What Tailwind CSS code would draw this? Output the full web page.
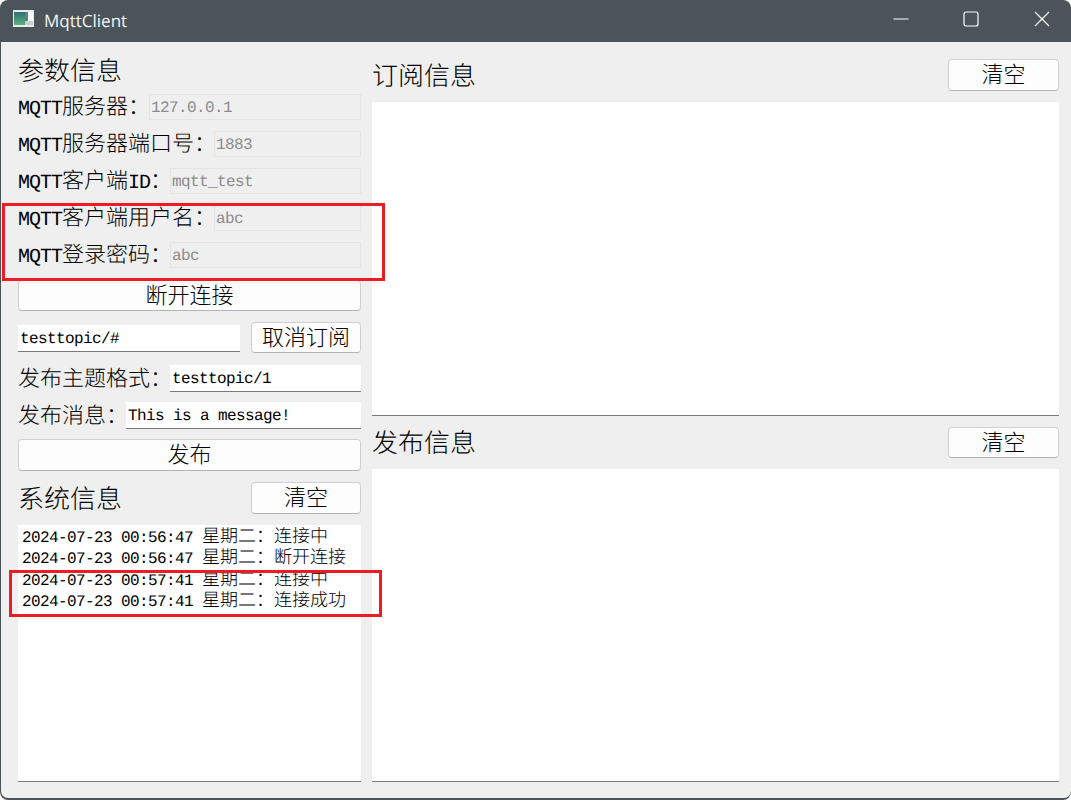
<!doctype html>
<html lang="zh">
<head>
<meta charset="utf-8">
<title>MqttClient</title>
<script src="https://cdn.jsdelivr.net/npm/@tailwindcss/browser@4"></script>
</head>
<body class="m-0 bg-white">
<div class="relative w-[1071px] h-[801px] overflow-hidden bg-white font-['Liberation_Mono','Noto_Sans_CJK_SC',monospace] font-light text-black [text-rendering:geometricPrecision]">
  <div class="w-[1071px] h-[800px] flex flex-col rounded-[8px] overflow-hidden bg-[#4b5459] pl-px pb-[2px]">
    <div class="h-[42px] -ml-px flex items-center shrink-0 pb-[5px]">
      <svg class="ml-[13px] w-[21px] h-[17px]" viewBox="0 0 21 17">
        <defs><linearGradient id="g" x1="0" y1="0" x2="0" y2="1"><stop offset="0" stop-color="#2f6f78"/><stop offset="1" stop-color="#5fb07c"/></linearGradient></defs>
        <rect width="21" height="17" fill="#e8ecec"/>
        <rect x="1" y="2" width="11" height="13" fill="url(#g)"/>
        <rect x="12" y="2" width="3" height="9" fill="#5d7f86"/>
        <rect x="15" y="2" width="5" height="9" fill="#fafafa"/>
        <rect x="12" y="11" width="8" height="4" fill="#c9cfcf"/>
      </svg>
      <span class="ml-[10px] pt-[3px] text-[17px] text-[#f2f4f4] font-['Open_Sans',sans-serif] font-normal leading-none">MqttClient</span>
      <div class="ml-auto flex items-center">
        <svg class="w-[16px] h-[16px] mr-[54px]" viewBox="0 0 16 16"><path d="M0.5 8H15.5" stroke="#fff" stroke-width="1"/></svg>
        <svg class="w-[16px] h-[16px] mr-[55px]" viewBox="0 0 16 16"><rect x="1" y="1" width="14" height="14" rx="2" fill="none" stroke="#fff" stroke-width="1.2"/></svg>
        <svg class="w-[16px] h-[16px] mr-[21px]" viewBox="0 0 16 16"><path d="M1 1L15 15M15 1L1 15" stroke="#fff" stroke-width="1.1"/></svg>
      </div>
    </div>
    <div class="flex-1 flex gap-[11px] bg-[#efefef] rounded-b-[7px] pl-[17px] pr-[12px] pt-[12px] pb-[16px]">
      <div class="w-[343px] flex flex-col shrink-0">
        <div class="h-[32px] flex items-center pt-[5px] text-[26px] leading-none">参数信息</div>
        <div class="mt-[8px] h-[26px] flex items-center">
          <label class="w-[131px] pt-[4px] shrink-0 whitespace-nowrap text-[22px] leading-none"><span class="text-[20px] tracking-[-1px]">MQTT</span>服务器：</label>
          <input disabled value="127.0.0.1" class="flex-1 min-w-0 h-full px-px pt-[2px] bg-[#efefef] border border-[#e4e4e4] text-[16px] tracking-[-0.6px] text-[#8c8c8c] font-['Liberation_Mono',monospace] [text-rendering:geometricPrecision]">
        </div>
        <div class="mt-[11px] h-[26px] flex items-center">
          <label class="w-[196px] pt-[4px] shrink-0 whitespace-nowrap text-[22px] leading-none"><span class="text-[20px] tracking-[-1px]">MQTT</span>服务器端口号：</label>
          <input disabled value="1883" class="flex-1 min-w-0 h-full px-px pt-[2px] bg-[#efefef] border border-[#e4e4e4] text-[16px] tracking-[-0.6px] text-[#8c8c8c] font-['Liberation_Mono',monospace] [text-rendering:geometricPrecision]">
        </div>
        <div class="mt-[11px] h-[26px] flex items-center">
          <label class="w-[152px] pt-[4px] shrink-0 whitespace-nowrap text-[22px] leading-none"><span class="text-[20px] tracking-[-1px]">MQTT</span>客户端<span class="text-[20px] tracking-[-1px]">ID</span>：</label>
          <input disabled value="mqtt_test" class="flex-1 min-w-0 h-full px-px pt-[2px] bg-[#efefef] border border-[#e4e4e4] text-[16px] tracking-[-0.6px] text-[#8c8c8c] font-['Liberation_Mono',monospace] [text-rendering:geometricPrecision]">
        </div>
        <div class="mt-[11px] h-[26px] flex items-center">
          <label class="w-[196px] pt-[4px] shrink-0 whitespace-nowrap text-[22px] leading-none"><span class="text-[20px] tracking-[-1px]">MQTT</span>客户端用户名：</label>
          <input disabled value="abc" class="flex-1 min-w-0 h-full px-px pt-[2px] bg-[#efefef] border border-[#e4e4e4] text-[16px] tracking-[-0.6px] text-[#8c8c8c] font-['Liberation_Mono',monospace] [text-rendering:geometricPrecision]">
        </div>
        <div class="mt-[11px] h-[26px] flex items-center">
          <label class="w-[152px] pt-[4px] shrink-0 whitespace-nowrap text-[22px] leading-none"><span class="text-[20px] tracking-[-1px]">MQTT</span>登录密码：</label>
          <input disabled value="abc" class="flex-1 min-w-0 h-full px-px pt-[2px] bg-[#efefef] border border-[#e4e4e4] text-[16px] tracking-[-0.6px] text-[#8c8c8c] font-['Liberation_Mono',monospace] [text-rendering:geometricPrecision]">
        </div>
        <button class="mt-[12px] h-[31px] pt-[4px] shrink-0 rounded-[4px] bg-[#fdfdfd] border border-[#d0d0d0] border-b-[#b4b4b4] text-[22px] leading-none">断开连接</button>
        <div class="mt-[11px] h-[31px] flex items-end justify-between">
          <input value="testtopic/#" class="w-[222px] h-[27px] mb-px px-[2px] pt-[2px] bg-white border-b border-b-[#7a7a7a] text-[16px] tracking-[-0.6px] font-['Liberation_Mono',monospace] [text-rendering:geometricPrecision]">
          <button class="w-[110px] h-[31px] pt-[4px] rounded-[4px] bg-[#fdfdfd] border border-[#d0d0d0] border-b-[#b4b4b4] text-[22px] leading-none">取消订阅</button>
        </div>
        <div class="mt-[12px] h-[27px] flex items-center">
          <label class="w-[152px] pt-[4px] shrink-0 whitespace-nowrap text-[22px] leading-none">发布主题格式：</label>
          <input value="testtopic/1" class="flex-1 min-w-0 h-full px-[2px] pt-[2px] bg-white border-b border-b-[#7a7a7a] text-[16px] tracking-[-0.6px] font-['Liberation_Mono',monospace] [text-rendering:geometricPrecision]">
        </div>
        <div class="mt-[10px] h-[27px] flex items-center">
          <label class="w-[108px] pt-[4px] shrink-0 whitespace-nowrap text-[22px] leading-none">发布消息：</label>
          <input value="This is a message!" class="flex-1 min-w-0 h-full px-[2px] pt-[2px] bg-white border-b border-b-[#7a7a7a] text-[16px] tracking-[-0.6px] font-['Liberation_Mono',monospace] [text-rendering:geometricPrecision]">
        </div>
        <button class="mt-[10px] h-[32px] pt-[4px] shrink-0 rounded-[4px] bg-[#fdfdfd] border border-[#d0d0d0] border-b-[#b4b4b4] text-[22px] leading-none">发布</button>
        <div class="mt-[11px] h-[32px] flex items-center justify-between">
          <div class="pt-[5px] text-[26px] leading-none">系统信息</div>
          <button class="w-[110px] h-[32px] pt-[4px] rounded-[4px] bg-[#fdfdfd] border border-[#d0d0d0] border-b-[#b4b4b4] text-[22px] leading-none">清空</button>
        </div>
        <div class="mt-[11px] flex-1 bg-white border-b border-b-[#7a7a7a] pt-[3px] px-[4px] text-[18px] leading-[21.33px] whitespace-nowrap">
          <div class="h-[21.33px]"><span class="text-[16px] tracking-[-0.6px] leading-none">2024-07-23 00:56:47&nbsp;</span>星期二：连接中</div>
          <div class="h-[21.33px]"><span class="text-[16px] tracking-[-0.6px] leading-none">2024-07-23 00:56:47&nbsp;</span>星期二：断开连接</div>
          <div class="h-[21.33px]"><span class="text-[16px] tracking-[-0.6px] leading-none">2024-07-23 00:57:41&nbsp;</span>星期二：连接中</div>
          <div class="h-[21.33px]"><span class="text-[16px] tracking-[-0.6px] leading-none">2024-07-23 00:57:41&nbsp;</span>星期二：连接成功</div>
        </div>
      </div>
      <div class="flex-1 flex flex-col min-w-0">
        <div class="mt-[5px] h-[32px] flex items-center justify-between shrink-0">
          <div class="pt-[5px] text-[26px] leading-none">订阅信息</div>
          <button class="w-[111px] h-[32px] pt-[4px] rounded-[4px] bg-[#fdfdfd] border border-[#d0d0d0] border-b-[#b4b4b4] text-[22px] leading-none">清空</button>
        </div>
        <div class="mt-[11px] h-[314px] shrink-0 bg-white border-b border-b-[#7a7a7a]"></div>
        <div class="mt-[11px] h-[31px] flex items-center justify-between shrink-0">
          <div class="pt-[5px] text-[26px] leading-none">发布信息</div>
          <button class="w-[111px] h-[31px] pt-[4px] rounded-[4px] bg-[#fdfdfd] border border-[#d0d0d0] border-b-[#b4b4b4] text-[22px] leading-none">清空</button>
        </div>
        <div class="mt-[11px] flex-1 bg-white border-b border-b-[#7a7a7a]"></div>
      </div>
    </div>
  </div>
  <div class="absolute left-[2px] top-[203px] w-[383px] h-[78px] border-[3px] border-[#ed1c24]"></div>
  <div class="absolute left-[9px] top-[570px] w-[373px] h-[47px] border-[3px] border-[#ed1c24]"></div>
</div>
</body>
</html>
